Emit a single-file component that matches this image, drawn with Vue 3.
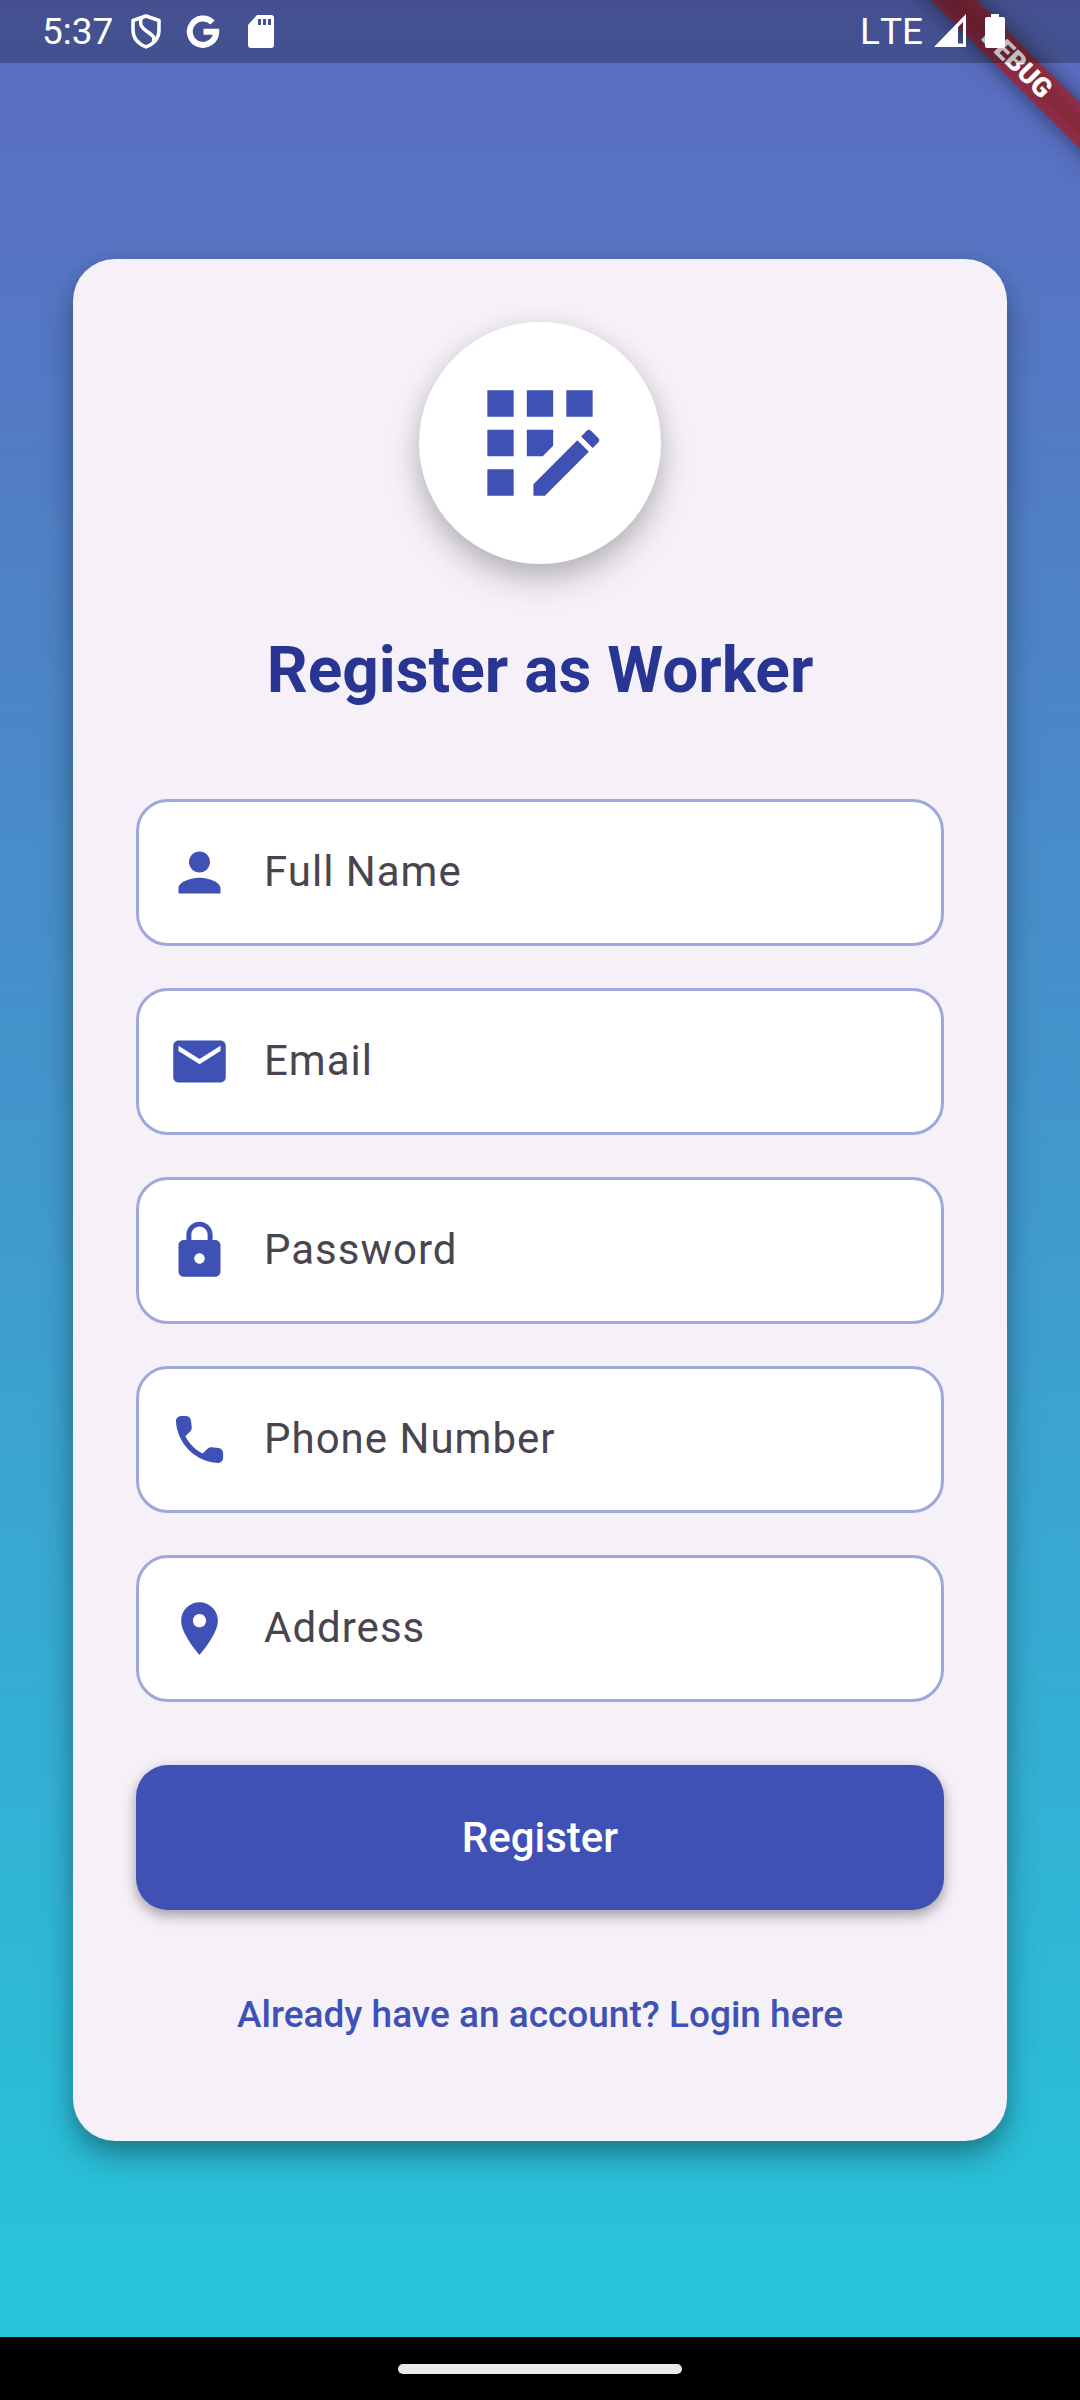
<script setup>
import { reactive } from 'vue'

const fields = [
  { key: 'name', label: 'Full Name', type: 'text', icon: 'M12 12c2.21 0 4-1.79 4-4s-1.79-4-4-4-4 1.79-4 4 1.79 4 4 4zm0 2c-2.67 0-8 1.34-8 4v2h16v-2c0-2.66-5.33-4-8-4z' },
  { key: 'email', label: 'Email', type: 'email', icon: 'M20 4H4c-1.1 0-1.99.9-1.99 2L2 18c0 1.1.9 2 2 2h16c1.1 0 2-.9 2-2V6c0-1.1-.9-2-2-2zm0 4l-8 5-8-5V6l8 5 8-5v2z' },
  { key: 'password', label: 'Password', type: 'password', icon: 'M18 8h-1V6c0-2.76-2.24-5-5-5S7 3.24 7 6v2H6c-1.1 0-2 .9-2 2v10c0 1.1.9 2 2 2h12c1.1 0 2-.9 2-2V10c0-1.1-.9-2-2-2zm-6 9c-1.1 0-2-.9-2-2s.9-2 2-2 2 .9 2 2-.9 2-2 2zm3.1-9H8.9V6c0-1.71 1.39-3.1 3.1-3.1 1.71 0 3.1 1.39 3.1 3.1v2z' },
  { key: 'phone', label: 'Phone Number', type: 'tel', icon: 'M19.23 15.26l-2.54-.29c-.61-.07-1.21.14-1.64.57l-1.84 1.84c-2.83-1.44-5.15-3.75-6.59-6.59l1.85-1.85c.43-.43.64-1.03.57-1.64l-.29-2.52c-.12-1.01-.97-1.77-1.99-1.77H5.03c-1.13 0-2.07.94-2 2.07.53 8.54 7.36 15.36 15.89 15.89 1.13.07 2.07-.87 2.07-2v-1.73c.01-1.01-.75-1.86-1.76-1.98z' },
  { key: 'address', label: 'Address', type: 'text', icon: 'M12 2C8.13 2 5 5.13 5 9c0 5.25 7 13 7 13s7-7.75 7-13c0-3.87-3.13-7-7-7zm0 9.5c-1.38 0-2.5-1.12-2.5-2.5s1.12-2.5 2.5-2.5 2.5 1.12 2.5 2.5-1.12 2.5-2.5 2.5z' }
]

const form = reactive({ name: '', email: '', password: '', phone: '', address: '' })
</script>

<template>
  <div class="screen">
    <div class="ribbon" aria-hidden="true"><span>DEBUG</span></div>

    <header class="status">
      <div class="status-group">
        <time>5:37</time>
        <svg viewBox="0 0 48 63" class="wide">
          <path d="M24 16L37 20.500V30C37 38 31.500 44 24 47C16.500 44 11 38 11 30V20.500Z" fill="none" stroke="#fff" stroke-width="3.500" stroke-linejoin="round" />
          <path d="M19.500 17.500C17 25 20 28 25 31.500C31 35.500 33 37 31.500 41.500" fill="none" stroke="#fff" stroke-width="3.500" />
        </svg>
        <svg viewBox="0 0 48 63" class="wide">
          <path d="M33.500 22.500A13.200 13.200 0 1 0 37.200 31.700H24.500" fill="none" stroke="#fff" stroke-width="6" />
        </svg>
        <svg viewBox="0 0 48 63" class="wide">
          <path fill-rule="evenodd" fill="#fff" d="M21 15H35a3 3 0 0 1 3 3V45a3 3 0 0 1-3 3H15a3 3 0 0 1-3-3V25ZM22 19v6h3v-6ZM27 19v6h3v-6ZM32 19v6h3v-6Z" />
        </svg>
      </div>
      <div class="status-group">
        <span class="network">LTE</span>
        <svg viewBox="0 0 36 63" class="narrow">
          <path fill-rule="evenodd" fill="#fff" d="M2 47L34 14V47ZM26 27V43.500H31V22Z" />
        </svg>
        <svg viewBox="0 0 36 63" class="narrow">
          <path fill="#fff" d="M14 14h8v3h4a2 2 0 0 1 2 2v27a2 2 0 0 1-2 2H10a2 2 0 0 1-2-2V19a2 2 0 0 1 2-2h4z" />
        </svg>
      </div>
    </header>

    <main class="body">
      <form class="card" @submit.prevent>
        <div class="badge">
          <svg viewBox="0 0 24 24">
            <path d="M10 4h4v4h-4zM4 16h4v4H4zM4 10h4v4H4zM4 4h4v4H4zM16 4h4v4h-4zM14 12.420V10h-4v4h2.420zM20.880 11.290l-1.170-1.170c-.16-.16-.42-.16-.58 0L18.250 11 20 12.750l.88-.88c.16-.16.16-.42 0-.58zM11 18.250V20h1.750l6.670-6.670-1.750-1.750z" />
          </svg>
        </div>
        <h1>Register as Worker</h1>

        <div class="fields">
          <label v-for="f in fields" :key="f.key" class="field">
            <svg viewBox="0 0 24 24"><path :d="f.icon" /></svg>
            <input v-model="form[f.key]" :type="f.type" :placeholder="f.label" :aria-label="f.label" />
          </label>
        </div>

        <button type="submit" class="submit">Register</button>
        <a href="#login" class="login">Already have an account? Login here</a>
      </form>
    </main>

    <footer class="nav"><div class="pill"></div></footer>
  </div>
</template>

<style>
body {
  margin: 0;
}
</style>

<style scoped>
.screen {
  position: relative;
  display: flex;
  flex-direction: column;
  min-height: 100vh;
  overflow: hidden;
  font-family: Roboto, "Liberation Sans", sans-serif;
  background: #000;
}

.status {
  position: absolute;
  top: 0;
  left: 0;
  right: 0;
  z-index: 3;
  display: flex;
  justify-content: space-between;
  height: 63px;
  padding: 0 67px 0 42px;
  box-sizing: border-box;
  background: rgba(0, 0, 0, 0.25);
  color: #fff;
  font-size: 37px;
  line-height: 63px;
}

.status-group {
  display: flex;
  gap: 9px;
}

.network {
  font-kerning: none;
}

.wide {
  width: 48px;
  height: 63px;
}

.narrow {
  width: 36px;
  height: 63px;
}

.ribbon {
  position: absolute;
  z-index: 2;
  top: 47px;
  right: -137px;
  width: 400px;
  height: 32px;
  transform: rotate(45deg);
  background: linear-gradient(#8e2e48, #85283a 50%, #8e2e48);
  box-shadow: 0 0 22px rgba(0, 0, 0, 0.5);
  color: #fff;
  font-size: 27px;
  font-weight: 900;
  line-height: 32px;
  text-align: center;
}

.body {
  flex: 1;
  display: flex;
  flex-direction: column;
  justify-content: center;
  padding: 126px 73px 63px;
  background: linear-gradient(#5c6bc0, #26c6da);
}

.card {
  display: flex;
  flex-direction: column;
  align-items: center;
  padding: 63px;
  border-radius: 42px;
  background: #f6f1f9;
  box-shadow: 0 16px 32px rgba(0, 0, 0, 0.3), 0 6px 16px rgba(0, 0, 0, 0.1);
}

.badge {
  display: flex;
  padding: 42px;
  border-radius: 50%;
  background: #fff;
  box-shadow: 0 16px 32px rgba(0, 0, 0, 0.22), 0 4px 24px rgba(0, 0, 0, 0.08);
}

.badge svg {
  width: 158px;
  height: 158px;
  fill: #3f51b5;
}

h1 {
  margin: 65px 0 86px;
  color: #283593;
  font-size: 64px;
  font-weight: 700;
  line-height: 84px;
}

.fields {
  align-self: stretch;
  display: flex;
  flex-direction: column;
  gap: 42px;
}

.field {
  display: flex;
  align-items: center;
  gap: 33px;
  height: 147px;
  padding: 0 29px;
  box-sizing: border-box;
  border: 3px solid #9fa8da;
  border-radius: 32px;
  background: #fff;
}

.field svg {
  flex: none;
  width: 63px;
  height: 63px;
  fill: #3f51b5;
}

.field input {
  flex: 1;
  min-width: 0;
  padding: 0 0 2px;
  border: 0;
  outline: 0;
  background: transparent;
  color: #1d1b20;
  font: inherit;
  font-size: 42px;
  letter-spacing: 1px;
}

.field input::placeholder {
  color: #49454f;
  opacity: 1;
}

.submit {
  align-self: stretch;
  height: 145px;
  margin: 63px 0 42px;
  border: 0;
  border-radius: 32px;
  background: #3f51b5;
  box-shadow: 0 6px 14px rgba(0, 0, 0, 0.3), 0 2px 12px rgba(0, 0, 0, 0.08);
  color: #fff;
  font: inherit;
  font-size: 42px;
  font-weight: 500;
}

.login {
  color: #3f51b5;
  font-size: 37px;
  font-weight: 500;
  line-height: 126px;
  text-decoration: none;
}

.nav {
  display: flex;
  align-items: center;
  justify-content: center;
  height: 63px;
}

.pill {
  width: 284px;
  height: 10px;
  border-radius: 5px;
  background: #ebebeb;
}
</style>
